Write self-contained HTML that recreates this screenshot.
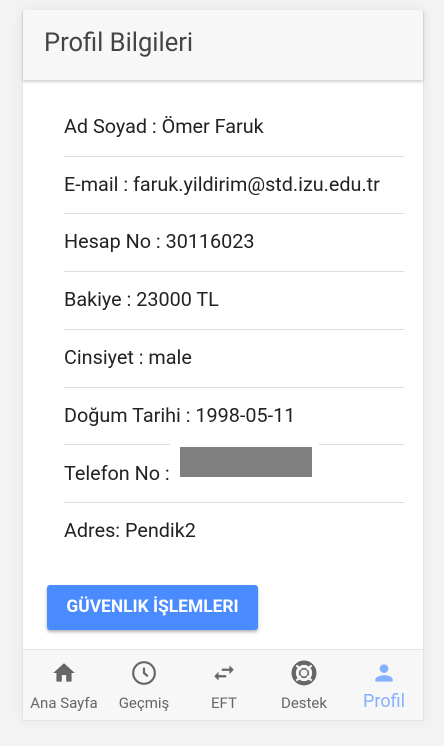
<!DOCTYPE html>
<html><head><meta charset="utf-8"><style>
*{margin:0;padding:0;box-sizing:border-box}
body{width:444px;height:746px;background:#f3f3f3;font-family:"Roboto","Liberation Sans",sans-serif;position:relative;overflow:hidden}
.card{position:absolute;left:22px;top:10px;width:402px;height:711px;background:#fff;box-shadow:0 0 12px rgba(0,0,0,.06);border:1px solid #e4e4e4;border-top:none}
.hdr{position:absolute;left:0;top:0;width:100%;height:70px;background:#f7f7f7;box-shadow:0 2px 3px rgba(0,0,0,.18)}
.hdr span{position:absolute;left:21px;top:18px;font-size:25.5px;color:#444}
.row{position:absolute;left:41px;font-size:19.8px;color:#222}
.div{position:absolute;height:1px;background:#dedede}
.btn{position:absolute;left:24px;top:575px;width:211px;height:45px;background:#4a8cff;border-radius:3px;box-shadow:0 2px 3px rgba(0,0,0,.3);color:#fff;font-weight:bold;font-size:17.4px;text-align:center;line-height:45px}
.tab{position:absolute;left:0;top:639px;width:100%;height:71px;background:#f7f7f7;border-top:1px solid #e6e6e6}
.t{position:absolute;top:0;width:80px;text-align:center;font-size:15px;color:#666}
.t svg{position:absolute;top:10px;left:27px}
.t span{position:absolute;top:44px;left:0;width:100%}
</style></head><body>
<div class="card">
<div class="hdr"><span>Profil Bilgileri</span></div>
<div class="row" style="top:105px">Ad Soyad : Ömer Faruk</div>
<div class="div" style="left:41px;width:340px;top:146px"></div>
<div class="row" style="top:163px">E-mail : faruk.yildirim@std.izu.edu.tr</div>
<div class="div" style="left:41px;width:340px;top:203px"></div>
<div class="row" style="top:220px">Hesap No : 30116023</div>
<div class="div" style="left:41px;width:340px;top:261px"></div>
<div class="row" style="top:278px">Bakiye : 23000 TL</div>
<div class="div" style="left:41px;width:340px;top:319px"></div>
<div class="row" style="top:336px">Cinsiyet : male</div>
<div class="div" style="left:41px;width:340px;top:377px"></div>
<div class="row" style="top:394px">Doğum Tarihi : 1998-05-11</div>
<div class="div" style="left:41px;width:106px;top:434px"></div>
<div class="div" style="left:296px;width:85px;top:434px"></div>
<div class="row" style="top:452px">Telefon No :</div>
<div style="position:absolute;left:157px;top:437px;width:132px;height:30px;background:#808080"></div>
<div class="div" style="left:41px;width:340px;top:492px"></div>
<div class="row" style="top:509px">Adres: Pendik2</div>
<div class="btn">GÜVENLIK İŞLEMLERI</div>
<div class="tab">
<div class="t" style="left:1px"><svg width="26" height="26" viewBox="0 0 24 24"><path fill="#666" d="M10 20v-6h4v6h5v-8h3L12 3 2 12h3v8z"/></svg><span>Ana Sayfa</span></div>
<div class="t" style="left:81px"><svg width="26" height="26" viewBox="0 0 24 24"><circle cx="12" cy="12" r="10" fill="none" stroke="#666" stroke-width="2"/><path d="M12 7v5l3.5 3" fill="none" stroke="#666" stroke-width="2"/></svg><span>Geçmiş</span></div>
<div class="t" style="left:161px"><svg width="26" height="26" viewBox="0 0 24 24"><path fill="#666" d="M6.99 11L3 15l3.99 4v-3H14v-2H6.99v-3zM21 9l-3.99-4v3H10v2h7.01v3L21 9z"/></svg><span>EFT</span></div>
<div class="t" style="left:241px"><svg width="26" height="26" viewBox="0 0 24 24"><circle cx="12" cy="12" r="9.5" fill="none" stroke="#666" stroke-width="4"/><circle cx="12" cy="12" r="4" fill="none" stroke="#666" stroke-width="1.5"/><path d="M5 5l4 4M19 5l-4 4M5 19l4-4M19 19l-4-4" stroke="#f7f7f7" stroke-width="2"/></svg><span>Destek</span></div>
<div class="t" style="left:321px;color:#86b0ff;font-size:18px"><svg width="26" height="26" viewBox="0 0 24 24"><path fill="#86b0ff" d="M12 12c2.2 0 4-1.8 4-4s-1.8-4-4-4-4 1.8-4 4 1.8 4 4 4zm0 2c-2.7 0-8 1.3-8 4v2h16v-2c0-2.7-5.3-4-8-4z"/></svg><span style="top:41px">Profil</span></div>
</div>
</div>
</body></html>
